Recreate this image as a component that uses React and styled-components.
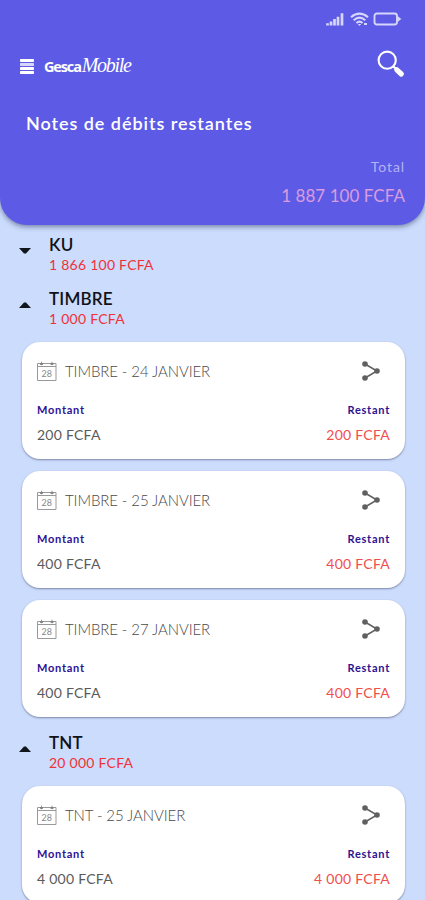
import React from 'react';
import styled, { createGlobalStyle } from 'styled-components';

const GlobalStyle = createGlobalStyle`
  * { box-sizing: border-box; }
  html, body { margin: 0; background: #ccdcfd; }
  body { overflow: hidden; font-family: Lato, "Open Sans", sans-serif; }
`;

const Screen = styled.main`
  height: 900px;
  width: 425px;
  overflow: hidden;
  background: #ccdcfd;
`;

const Header = styled.header`
  height: 225px;
  border-radius: 0 0 27px 27px;
  background: #5d5be5;
  box-shadow: 0 2px 5px rgba(40, 50, 90, 0.5);
  color: #fff;
`;

const StatusBar = styled.div`
  height: 38px;
  padding: 12px 23px 0 0;
  display: flex;
  justify-content: flex-end;
  align-items: flex-start;
`;

const TopBar = styled.div`
  height: 56px;
  padding: 0 20px;
  display: flex;
  align-items: center;
`;

const Brand = styled.div`
  flex: 1;
  margin-left: 10px;
  display: flex;
  align-items: baseline;
  line-height: 22px;
`;

const BrandBold = styled.span`
  font: 700 14.5px/22px "Open Sans", sans-serif;
  letter-spacing: -1.15px;
`;

const BrandScript = styled.span`
  font: italic 400 20px/22px "Liberation Serif", serif;
  letter-spacing: -1.3px;
  margin-left: 1px;
`;

const IconButton = styled.button`
  display: flex;
  padding: 0;
  border: 0;
  background: none;
  color: inherit;
`;

const SearchButton = styled(IconButton)`
  margin-bottom: 5px;
`;

const Title = styled.h1`
  margin: 16px 0 0 26px;
  font-size: 18px;
  line-height: 26px;
  font-weight: 600;
  letter-spacing: 0.95px;
  white-space: nowrap;
`;

const Summary = styled.div`
  margin: 20px 20px 0 0;
  display: flex;
  flex-direction: column;
  align-items: flex-end;
`;

const SummaryLabel = styled.span`
  margin-top: 1px;
  font-size: 14px;
  line-height: 20px;
  letter-spacing: 0.9px;
  color: #b4b2f3;
`;

const SummaryValue = styled.span`
  margin-top: 9px;
  font-size: 17px;
  line-height: 20px;
  letter-spacing: 0.05px;
  color: #da9be0;
`;

const Groups = styled.div`
  padding-top: 2px;
`;

const GroupHeader = styled.div`
  height: 54px;
  padding: 8px 0 0 19px;
  display: flex;
`;

const Arrow = styled.svg`
  width: 12px;
  height: 6px;
  margin: 13px 18px 0 0;
  transform: ${(p) => (p.$open ? 'none' : 'rotate(180deg)')};
`;

const GroupText = styled.div`
  display: flex;
  flex-direction: column;
`;

const GroupName = styled.span`
  height: 20px;
  font-size: 17px;
  line-height: 20px;
  font-weight: 600;
  letter-spacing: 0.2px;
  color: #101218;
`;

const Amount = styled.span`
  font-size: 14px;
  line-height: 20px;
  letter-spacing: 0.25px;
  color: ${(p) => p.$color};
`;

const CardList = styled.div`
  padding: 7px 20px 8px 22px;
  display: flex;
  flex-direction: column;
  gap: 12px;
`;

const Card = styled.article`
  height: 117px;
  padding: 14px 15px 0;
  border-radius: 18px;
  background: #fff;
  box-shadow: 0 1px 2px rgba(45, 50, 80, 0.5);
`;

const CardHead = styled.div`
  height: 30px;
  display: flex;
  align-items: center;
`;

const CardTitle = styled.span`
  flex: 1;
  margin-left: 8px;
  font-size: 15px;
  line-height: 20px;
  font-weight: 300;
  letter-spacing: -0.1px;
  color: #4a4a4a;
  white-space: nowrap;
`;

const Row = styled.div`
  display: flex;
  justify-content: space-between;
  margin-top: ${(p) => p.$gap};
`;

const Label = styled.span`
  font-size: 11px;
  line-height: 16px;
  font-weight: 700;
  letter-spacing: 0.75px;
  color: #2c1192;
`;

const Menu = () => (
  <svg width="14" height="17" viewBox="0 0 14 17" fill="#fff">
    <rect y="1" width="14" height="3" rx=".7" />
    <rect y="5" width="14" height="3" rx=".7" opacity=".75" />
    <rect y="9" width="14" height="3" rx=".7" />
    <rect y="13" width="14" height="3" rx=".7" />
  </svg>
);

const Search = () => (
  <svg width="28" height="28" viewBox="0 0 28 28" fill="none" stroke="#fff">
    <circle cx="10.2" cy="10.2" r="8.6" strokeWidth="2.1" />
    <path d="M16.5 16.5l3 3" strokeWidth="2.2" />
    <path d="M19.8 19.8l4.5 4.2" strokeWidth="5.2" strokeLinecap="round" />
  </svg>
);

const StatusIcons = () => (
  <svg width="77" height="15" viewBox="0 0 77 15" fill="none" stroke="#d6d5fa">
    <path d="M2.5 13.5v-2.3M6 13.5v-4M9.5 13.5v-6.5M13 13.5v-8.7M17 13.5V1.2" strokeWidth="2.7" />
    <path d="M26 5.2q8.5-7 17 0M28.7 8.2q5.8-5 11.6 0M31.4 11q3.1-2.7 6.2 0" strokeWidth="2.1" />
    <path d="M32.8 12h3.4l-1.7 2zM39 11h3v2h-3z" fill="#d6d5fa" stroke="none" />
    <rect x="49.5" y="1.5" width="22.5" height="11" rx="2.5" strokeWidth="1.9" />
    <path d="M72 3.5l4.3 3.5L72 10.5z" fill="#d6d5fa" stroke="none" />
  </svg>
);

const DayNumber = styled.text`
  font: 400 9px Lato, sans-serif;
  fill: #888;
  text-anchor: middle;
`;

const Calendar = () => (
  <svg width="20" height="21" viewBox="0 0 20 21" fill="none" stroke="#999" strokeWidth="1">
    <path d="M.5 2.5h18.5v17H.5zM.5 5.5H19M4.5 .7v3.6M15 .7v3.6" />
    <path d="M3 3h3M13.5 3h3" stroke="#777" strokeWidth="1.5" />
    <DayNumber x="9.8" y="16" stroke="none">28</DayNumber>
  </svg>
);

const Share = () => (
  <svg width="20" height="20" viewBox="0 0 20 20" fill="#606060">
    <path d="M4 3l12 7-12 7" fill="none" stroke="#606060" strokeWidth="1.5" />
    <circle cx="4" cy="3" r="2.8" />
    <circle cx="16" cy="10" r="2.8" />
    <circle cx="4" cy="17" r="2.8" />
  </svg>
);

const ShareButton = styled(IconButton)`
  margin-right: 9px;
`;

const groups = [
  { name: 'KU', total: '1 866 100 FCFA', notes: [] },
  {
    name: 'TIMBRE',
    total: '1 000 FCFA',
    notes: [
      { title: 'TIMBRE - 24 JANVIER', amount: '200 FCFA' },
      { title: 'TIMBRE - 25 JANVIER', amount: '400 FCFA' },
      { title: 'TIMBRE - 27 JANVIER', amount: '400 FCFA' },
    ],
  },
  { name: 'TNT', total: '20 000 FCFA', notes: [{ title: 'TNT - 25 JANVIER', amount: '4 000 FCFA' }] },
];

const NoteCard = ({ title, amount }) => (
  <Card>
    <CardHead>
      <Calendar />
      <CardTitle>{title}</CardTitle>
      <ShareButton aria-label="Partager"><Share /></ShareButton>
    </CardHead>
    <Row $gap="16px">
      <Label>Montant</Label>
      <Label>Restant</Label>
    </Row>
    <Row $gap="7px">
      <Amount $color="#5a5a5a">{amount}</Amount>
      <Amount $color="#ef4f4c">{amount}</Amount>
    </Row>
  </Card>
);

export default function App() {
  return (
    <Screen>
      <GlobalStyle />
      <Header>
        <StatusBar><StatusIcons /></StatusBar>
        <TopBar>
          <IconButton aria-label="Menu"><Menu /></IconButton>
          <Brand>
            <BrandBold>Gesca</BrandBold>
            <BrandScript>Mobile</BrandScript>
          </Brand>
          <SearchButton aria-label="Rechercher"><Search /></SearchButton>
        </TopBar>
        <Title>Notes de débits restantes</Title>
        <Summary>
          <SummaryLabel>Total</SummaryLabel>
          <SummaryValue>1 887 100 FCFA</SummaryValue>
        </Summary>
      </Header>
      <Groups>
        {groups.map((g) => (
          <section key={g.name}>
            <GroupHeader>
              <Arrow viewBox="0 0 12 6" $open={g.notes.length > 0}>
                <path d="M0 6L5 .5h2L12 6z" fill="#11151c" />
              </Arrow>
              <GroupText>
                <GroupName>{g.name}</GroupName>
                <Amount $color="#f03238">{g.total}</Amount>
              </GroupText>
            </GroupHeader>
            {g.notes.length > 0 && (
              <CardList>
                {g.notes.map((n) => <NoteCard key={n.title} {...n} />)}
              </CardList>
            )}
          </section>
        ))}
      </Groups>
    </Screen>
  );
}
